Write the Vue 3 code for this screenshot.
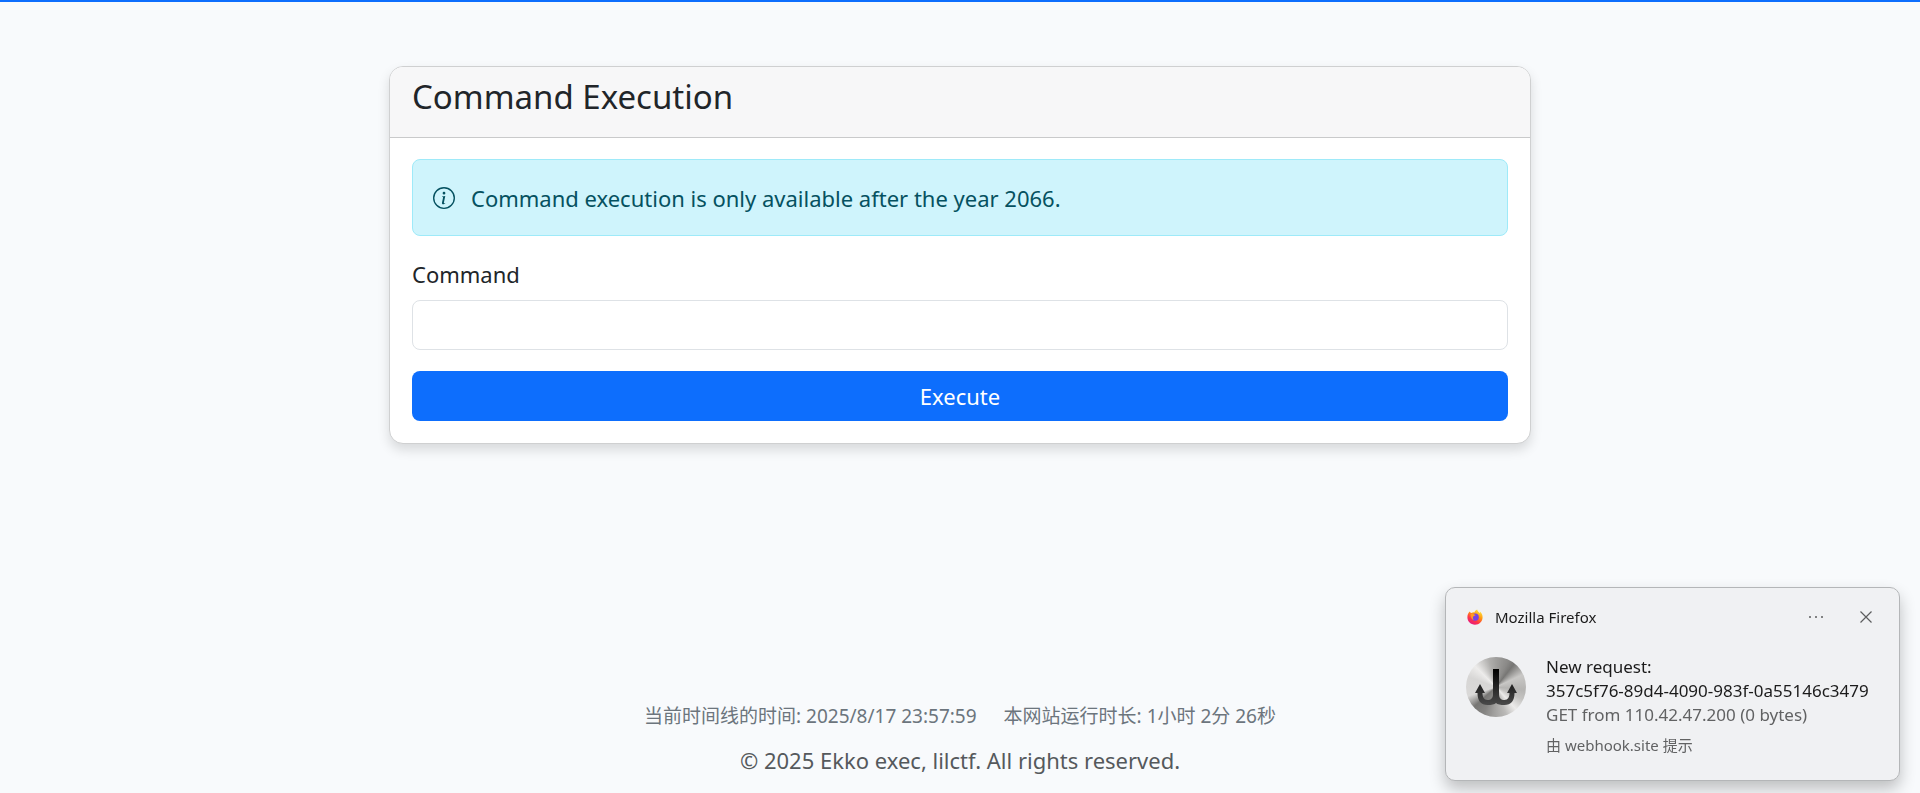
<script setup>
import { ref } from 'vue'

const command = ref('')
const now = '2025/8/17 23:57:59'
const uptime = '1小时 2分 26秒'
</script>

<template>
  <div class="page">
    <main class="container">
      <section class="card">
        <header class="card-header">
          <h1>Command Execution</h1>
        </header>
        <div class="card-body">
          <div class="alert" role="alert">
            <svg class="info" viewBox="0 0 16 16" fill="currentColor" aria-hidden="true">
              <path d="M8 15A7 7 0 1 1 8 1a7 7 0 0 1 0 14m0 1A8 8 0 1 0 8 0a8 8 0 0 0 0 16" />
              <path d="m8.93 6.588-2.29.287-.082.38.45.083c.294.07.352.176.288.469l-.738 3.468c-.194.897.105 1.319.808 1.319.545 0 1.178-.252 1.465-.598l.088-.416c-.2.176-.492.246-.686.246-.275 0-.375-.193-.304-.533zM9 4.5a1 1 0 1 1-2 0 1 1 0 0 1 2 0" />
            </svg>
            <span>Command execution is only available after the year 2066.</span>
          </div>
          <form @submit.prevent>
            <label for="command">Command</label>
            <input id="command" v-model="command" type="text" autocomplete="off" />
            <button type="submit" class="execute">Execute</button>
          </form>
        </div>
      </section>
    </main>

    <footer class="footer">
      <p class="times">
        <span>当前时间线的时间: {{ now }}</span>
        <span>本网站运行时长: {{ uptime }}</span>
      </p>
      <p class="copyright">© 2025 Ekko exec, lilctf. All rights reserved.</p>
    </footer>

    <aside class="toast" aria-label="Mozilla Firefox">
      <header class="toast-header">
        <svg class="firefox" viewBox="0 0 16 16" aria-hidden="true">
          <defs>
            <linearGradient id="flame" x1="0.85" y1="0" x2="0.25" y2="1">
              <stop offset="0" stop-color="#fff44f" />
              <stop offset="0.4" stop-color="#ff980e" />
              <stop offset="0.7" stop-color="#ff3647" />
              <stop offset="1" stop-color="#e31587" />
            </linearGradient>
          </defs>
          <path fill="url(#flame)" d="M2.600 2.600C3 3.300 3.600 3.800 4.400 4C5.400 3.500 6.500 3.200 7.400 3.400C8 1.900 9 0.900 10.200 0.500C10.300 2.200 11.800 2.900 12.700 4.200C13 3.700 13 3.200 12.900 2.600C14.700 4 15.600 6.100 15.600 8.200C15.600 12.500 12.300 15.700 8 15.700C3.700 15.700 0.400 12.500 0.400 8.300C0.400 6.100 1.300 4 2.600 2.600Z" />
          <circle cx="8.200" cy="8.200" r="3.600" fill="#7542e5" />
          <path fill="#ff9a24" d="M3.600 5.200C5.300 4.500 6.500 4.700 7.400 5.500L8.600 6C8 6.800 7 6.800 6.400 7.300C5.600 8.500 5.800 9.800 6.800 10.800C5.600 10.800 4.800 10 4.400 9.200C3.800 8 3.500 6.400 3.600 5.200Z" />
        </svg>
        <span class="app-name">Mozilla Firefox</span>
        <button type="button" class="icon-button" aria-label="More options">
          <svg viewBox="0 0 16 16" fill="#5c5d5e">
            <circle cx="2" cy="8" r="1" />
            <circle cx="8" cy="8" r="1" />
            <circle cx="14" cy="8" r="1" />
          </svg>
        </button>
        <button type="button" class="icon-button" aria-label="Close">
          <svg viewBox="0 0 16 16" fill="none" stroke="#5c5d5e" stroke-width="1.200">
            <path d="M2.500 2.500L13.500 13.500M13.500 2.500L2.500 13.500" />
          </svg>
        </button>
      </header>
      <div class="toast-body">
        <div class="avatar">
          <svg viewBox="0 0 60 60" aria-hidden="true">
            <defs>
              <linearGradient id="hook" gradientUnits="userSpaceOnUse" x1="0" y1="12" x2="0" y2="48">
                <stop offset="0" stop-color="#000" />
                <stop offset="1" stop-color="#4a4a4a" />
              </linearGradient>
            </defs>
            <path fill="url(#hook)" d="M27 12H33V37C33 41 35 43 38.500 43C42 43 43.500 40 43.500 36H41L46 27L51 36H48.500C48.500 44 45 48 38.500 48C34.500 48 31.500 47.500 30 46C28.500 47.500 25.500 48 21.500 48C15 48 11.500 44 11.500 36H9L14 27L19 36H16.500C16.500 40 18 43 21.500 43C25 43 27 41 27 37Z" />
          </svg>
        </div>
        <div class="message">
          <p class="title">New request:</p>
          <p class="title">357c5f76-89d4-4090-983f-0a55146c3479</p>
          <p class="detail">GET from 110.42.47.200 (0 bytes)</p>
          <p class="source">由 webhook.site 提示</p>
        </div>
      </div>
    </aside>
  </div>
</template>

<style>
body {
  margin: 0;
  background: #f8fafc;
}
</style>

<style scoped>
.page {
  box-sizing: border-box;
  min-height: 100vh;
  display: flex;
  flex-direction: column;
  border-top: 2px solid #0d6efd;
  color: #212529;
  font-family: "Noto Sans", "Noto Sans CJK SC", sans-serif;
  font-size: 22px;
  line-height: 32px;
}

h1,
p {
  margin: 0;
  font-weight: 400;
}

.container {
  box-sizing: border-box;
  width: 100%;
  max-width: 1186px;
  margin: 0 auto;
  padding: 64px 22px 0;
  flex: 1;
}

.card {
  border: 1px solid #cfd0d1;
  border-radius: 14px;
  background: #fff;
  box-shadow: 0 6px 12px rgba(0, 0, 0, 0.13);
}

.card-header {
  padding: 11px 22px 21px;
  border-bottom: 1px solid #c9cacb;
  border-radius: 13px 13px 0 0;
  background: #f7f7f8;
}

h1 {
  font-size: 33px;
  line-height: 38px;
}

.card-body {
  padding: 21px 22px 22px;
}

.alert {
  display: flex;
  align-items: center;
  gap: 16px;
  margin-bottom: 22px;
  padding: 22px 20px 21px;
  border: 1px solid #9eeaf9;
  border-radius: 8px;
  background: #cff4fc;
  color: #055160;
}

.info {
  width: 22px;
  height: 22px;
  flex: none;
}

form {
  display: flex;
  flex-direction: column;
}

label {
  margin-bottom: 10px;
}

input {
  box-sizing: border-box;
  width: 100%;
  height: 50px;
  margin: 0 0 21px;
  padding: 8px 16px;
  border: 1px solid #dee2e6;
  border-radius: 8px;
  background: #fff;
  color: inherit;
  font: inherit;
}

.execute {
  height: 50px;
  padding: 0 16px;
  border: 0;
  border-radius: 8px;
  background: #0d6efd;
  color: #fff;
  font: inherit;
  cursor: pointer;
}

.footer {
  padding-bottom: 17px;
  text-align: center;
}

.times {
  display: flex;
  justify-content: center;
  gap: 27px;
  margin-bottom: 12px;
  color: #6c757d;
  font-size: 19px;
}

.copyright {
  color: #55595c;
}

.toast {
  position: fixed;
  right: 20px;
  bottom: 12px;
  box-sizing: border-box;
  width: 455px;
  padding: 16px 20px 23px;
  border: 1px solid #b4b6b8;
  border-radius: 10px;
  background: #f0f1f3;
  box-shadow: 0 8px 16px rgba(0, 0, 0, 0.24);
  color: #1b1b1b;
}

.toast-header {
  display: flex;
  align-items: center;
  height: 26px;
  font-size: 15px;
  line-height: 26px;
}

.firefox {
  width: 16px;
  height: 16px;
  margin: 0 12px 0 1px;
}

.app-name {
  flex: 1;
}

.icon-button {
  display: flex;
  margin: 0 5px 0 29px;
  padding: 0;
  border: 0;
  background: none;
  cursor: pointer;
}

.icon-button svg {
  width: 16px;
  height: 16px;
}

.toast-body {
  display: flex;
  gap: 20px;
  padding-top: 25px;
}

.avatar {
  width: 60px;
  height: 60px;
  margin-top: 2px;
  flex: none;
  border-radius: 50%;
  background: conic-gradient(#a09f9d, #8a8987 25deg, #777674 38deg, #c9c8c6 65deg, #b5b4b2 95deg, #c4c3c1 115deg, #ecebea 138deg, #bab9b7 160deg, #a09f9d 185deg, #858482 205deg, #777674 228deg, #dad9d8 252deg, #d7d6d5 290deg, #edeceb 315deg, #b0afad 345deg, #a09f9d);
}

.avatar svg {
  display: block;
}

.message {
  min-width: 0;
  font-size: 17px;
  line-height: 24px;
  white-space: nowrap;
}

.detail {
  color: #616263;
}

.source {
  margin-top: 6px;
  color: #616263;
  font-size: 15px;
}
</style>
